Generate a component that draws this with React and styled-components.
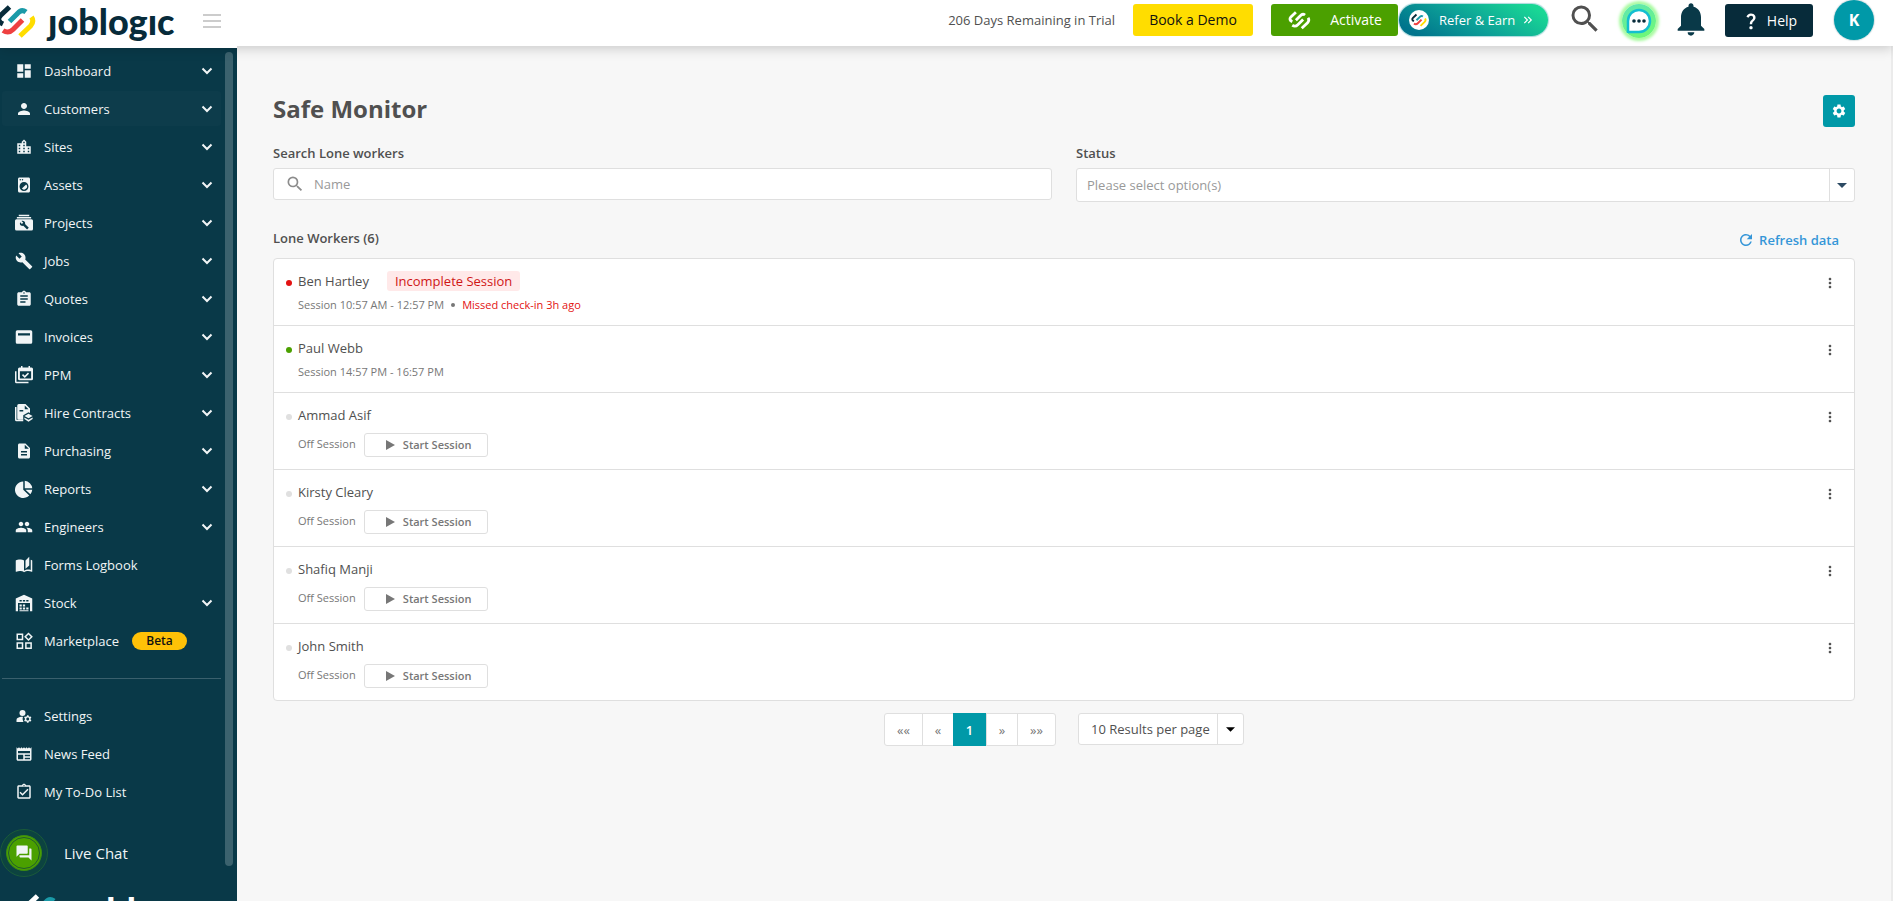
import React from 'react'
import styled, { createGlobalStyle } from 'styled-components'
import {
  MdDashboard, MdPerson, MdLocationCity, MdLocalLaundryService, MdBuild, MdAssignment,
  MdDescription, MdPeople, MdAutoStories, MdManageAccounts, MdNewspaper,
  MdOutlineAssignmentTurnedIn, MdForum, MdSearch, MdSettings, MdRefresh, MdMoreVert,
  MdKeyboardDoubleArrowRight, MdNotifications, MdQuestionMark,
} from 'react-icons/md'

const colors = {
  navy: '#093948',
  ink: '#072b3a',
  teal: '#0099a8',
  green: '#4ba000',
  yellow: '#ffdd00',
  red: '#e31212',
  text: '#505050',
  muted: '#777777',
  line: '#dfdfdf',
  page: '#f7f7f7',
}

const GlobalStyle = createGlobalStyle`
  * {
    box-sizing: border-box;
  }
  body {
    margin: 0;
    background: ${colors.page};
    color: ${colors.text};
    font-family: "Open Sans", "Noto Sans", sans-serif;
    font-size: 13px;
    line-height: 20px;
    overflow: hidden;
  }
  button, input, select {
    font: inherit;
    color: inherit;
  }
  button {
    border: 0;
    padding: 0;
    background: none;
    cursor: pointer;
  }
  a {
    color: inherit;
    text-decoration: none;
  }
  svg {
    display: block;
    flex: none;
  }
`

/* ---------- logo ---------- */

// color paints the whole mark, lead only the first stripe
const LogoMark = ({ width, height, left = -4, color, lead = '#072b3a' }) => (
  <svg width={width} height={height} viewBox={`${left} 4 ${36 - left} 36`} fill="none" strokeWidth="5" aria-hidden="true">
    <path stroke={color || lead} d="M3 25 Q-4 21.500 0.500 16.500 L9.500 8" />
    <path stroke={color || '#1a9aa8'} d="M9.500 22.500 L17.500 14.500 Q21.500 9.500 26 13" />
    <path stroke={color || '#ee4040'} d="M22.500 21 L13 30.500 Q8.500 35 3 31.500" />
    <path stroke={color || '#ffdd00'} d="M31.500 18 Q34.500 22.500 30.500 27 L20 37" />
  </svg>
)

const Brand = styled.a`
  display: flex;
  align-items: center;
  gap: 12px;
`

const BrandName = styled.span`
  color: ${(props) => props.$color};
  font-family: Lato, sans-serif;
  font-size: 36px;
  line-height: 36px;
  font-weight: 900;
`

/* ---------- header ---------- */

const Header = styled.header`
  position: relative;
  z-index: 2;
  display: flex;
  align-items: flex-start;
  height: 46px;
  background: #fff;
  box-shadow: 0 2px 12px rgba(0, 0, 0, 0.2);
`

const BrandArea = styled.div`
  display: flex;
  align-items: flex-start;
  gap: 29px;
  height: 48px;
  width: 237px;
  background: #fff;
`

const MenuToggle = styled.button`
  display: flex;
  flex-direction: column;
  gap: 4px;
  margin-top: 14px;
`

const MenuBar = styled.span`
  width: 18px;
  height: 2px;
  background: #cccccc;
`

const HeaderTools = styled.div`
  display: flex;
  align-items: flex-start;
  margin-left: auto;
  padding: 4px 19px 0 0;
`

const Trial = styled.span`
  margin: 6px 18px 0 0;
`

const HeaderButton = styled.button`
  display: flex;
  align-items: center;
  justify-content: center;
  gap: ${(props) => props.$gap || 0}px;
  width: ${(props) => props.$width}px;
  height: ${(props) => props.$height || 32}px;
  border-radius: 3px;
  background: ${(props) => props.$bg};
  color: ${(props) => props.$color || '#fff'};
  font-size: 14px;
  font-weight: 500;
`

const Refer = styled.button`
  display: flex;
  align-items: center;
  width: 149px;
  height: 32px;
  padding-left: 10px;
  border-radius: 16px;
  background: linear-gradient(30deg, #00748c 10%, #0c9e97 45%, #19d795 90%);
  box-shadow: 0 0 1px 1px #a9d9dc;
  color: #fff;
  font-weight: 500;
`

const ReferMark = styled.span`
  display: flex;
  align-items: center;
  justify-content: center;
  width: 20px;
  height: 20px;
  margin-right: 10px;
  border-radius: 50%;
  background: #fff;
`

const IconButton = styled.button`
  display: flex;
  align-items: center;
  height: 30px;
  color: ${(props) => props.$color};
`

const Spacer = styled.span`
  width: ${(props) => props.$w}px;
`

const ChatBubble = styled.button`
  display: flex;
  align-items: center;
  justify-content: center;
  width: 34px;
  height: 34px;
  border-radius: 50%;
  background: linear-gradient(160deg, #5fe6b4, #70fa70);
  box-shadow: 0 0 3px 3px #a8fba0;
`

const Avatar = styled.button`
  width: 40px;
  height: 40px;
  margin-top: -4px;
  border-radius: 50%;
  background: ${colors.teal};
  box-shadow: 0 0 1px 1px #d8e3e5;
  color: #fff;
  font-size: 16px;
  font-weight: 700;
`

/* ---------- sidebar ---------- */

const Layout = styled.div`
  display: flex;
  height: calc(100vh - 46px);
`

const Sidebar = styled.aside`
  display: flex;
  flex: none;
  width: 237px;
  padding-top: 2px;
  background: ${colors.navy};
  color: #f1f5f6;
  overflow: hidden;
`

const SidebarBody = styled.div`
  width: 221px;
  padding: 5px 0 0 2px;
`

const NavList = styled.ul`
  display: grid;
  gap: 3px;
  margin: 0;
  padding: 0;
  list-style: none;
`

const NavLink = styled.a`
  display: flex;
  align-items: center;
  height: 35px;
  padding: 0 8px 0 13px;
  border-radius: 3px;
  background: ${(props) => (props.$active ? '#0d3c4b' : 'transparent')};
  font-size: 13px;
  font-weight: 500;
`

const NavIcon = styled.span`
  display: flex;
  width: 29px;
`

const Chevron = styled.svg`
  margin-left: auto;
`

const Beta = styled.span`
  width: 55px;
  margin-left: 13px;
  border-radius: 9px;
  background: #ffc107;
  color: #111;
  font-size: 12px;
  line-height: 18px;
  font-weight: 600;
  text-align: center;
`

const Divider = styled.hr`
  height: 1px;
  margin: 20px 0 19px;
  border: 0;
  background: #3a606d;
`

const LiveChat = styled.a`
  display: flex;
  align-items: center;
  gap: 16px;
  margin: 20px 0 0 -2px;
  font-size: 15px;
`

const ChatRing = styled.span`
  display: flex;
  align-items: center;
  justify-content: center;
  width: 48px;
  height: 48px;
  border: 1px solid #1a5a39;
  border-radius: 50%;
  background: #0c4340;
`

const ChatDisc = styled.span`
  display: flex;
  align-items: center;
  justify-content: center;
  width: 36px;
  height: 36px;
  border: 1px solid #3b8b13;
  outline: 1px solid #215d2d;
  outline-offset: -3px;
  border-radius: 50%;
  background: ${colors.green};
`

const FooterBrand = styled.div`
  margin-top: 12px;
  padding-left: 26px;
`

const ScrollThumb = styled.div`
  width: 8px;
  height: calc(100vh - 87px);
  margin: 4px 4px 0 auto;
  border-radius: 4px;
  background: #3b626e;
`

/* Nav glyphs the icon set has no match for */
const Glyph = ({ children }) => (
  <svg width="18" height="18" viewBox="0 0 24 24" fill="currentColor">{children}</svg>
)

const ProjectsIcon = () => (
  <Glyph>
    <path d="M5 1h14v2H5zM2.500 4h19v2h-19z" />
    <path fillRule="evenodd" d="M2 7h20a2 2 0 0 1 2 2v11a2 2 0 0 1-2 2H2a2 2 0 0 1-2-2V9a2 2 0 0 1 2-2zm6.700 2.300 2.300 2.300-1.800 1.800L6.900 11c-.9 1.900-.2 3.500 1 4.300 1 .7 2.200.7 3.200.4l5 5 2.300-2.300-5-5c.3-1.200.1-2.300-.9-3.300-1-1-2.500-1.300-3.800-.8z" />
  </Glyph>
)

const InvoicesIcon = () => (
  <Glyph>
    <path fillRule="evenodd" d="M3 3h18a2 2 0 0 1 2 2v14a2 2 0 0 1-2 2H3a2 2 0 0 1-2-2V5a2 2 0 0 1 2-2zm1 4v3h16V7z" />
  </Glyph>
)

const PpmIcon = () => (
  <Glyph>
    <path fillRule="evenodd" d="M8 0h2v2h8V0h2v2h2a2 2 0 0 1 2 2v13a2 2 0 0 1-2 2H6a2 2 0 0 1-2-2V4a2 2 0 0 1 2-2h2zM6.500 7v9.500h15V7z" />
    <path d="M0 7h2v14h16v2H2a2 2 0 0 1-2-2z" />
    <path d="m10 11.500 3 3 5-5" fill="none" stroke="currentColor" strokeWidth="2" />
  </Glyph>
)

const HireIcon = () => (
  <Glyph>
    <path d="M0 4h2v17h9v2H2a2 2 0 0 1-2-2z" />
    <path fillRule="evenodd" d="M5 0h9l6 6v6l-2-1-7 4v6H5a2 2 0 0 1-2-2V2a2 2 0 0 1 2-2zm8 2v5h5zM6 8v2h5V8z" />
    <path d="m18 13 5.500 3-5.500 3-5.500-3zM12.500 18l5.500 3 5.500-3v2L18 23.500 12.500 20z" />
  </Glyph>
)

const ReportsIcon = () => (
  <Glyph>
    <path d="M11 2v11l8 7.500A11 11 0 1 1 11 2z" />
    <path d="M13 1a11 11 0 0 1 10 10H13zM14 13h9a11 11 0 0 1-2.500 6z" />
  </Glyph>
)

const StockIcon = () => (
  <Glyph>
    <path fillRule="evenodd" d="M12 1 23 6v17h-3V12H4v11H1V6zM6 8v2h3V8zm4.500 0v2h3V8zM15 8v2h3V8z" />
    <path d="M6 14h3v2.500H6zM6 18h3v2.500H6zM10.500 18h3v2.500h-3zM10.500 14h3v2.500h-3zM15 18h3v2.500h-3zM6 21.500h12V23H6z" />
  </Glyph>
)

const MarketplaceIcon = () => (
  <Glyph>
    <path fillRule="evenodd" d="M2 2h9v9H2zm2 2v5h5V4zM2 13.500h9v9H2zm2 2v5h5v-5zM13.500 13.500h9v9h-9zm2 2v5h5v-5zM18 .5 23.800 6.300 18 12.100l-5.800-5.800zm0 2.800-3 3 3 3 3-3z" />
  </Glyph>
)

const navItems = [
  { label: 'Dashboard', Icon: MdDashboard, open: true },
  { label: 'Customers', Icon: MdPerson, open: true, active: true },
  { label: 'Sites', Icon: MdLocationCity, open: true },
  { label: 'Assets', Icon: MdLocalLaundryService, open: true },
  { label: 'Projects', Icon: ProjectsIcon, open: true },
  { label: 'Jobs', Icon: MdBuild, open: true },
  { label: 'Quotes', Icon: MdAssignment, open: true },
  { label: 'Invoices', Icon: InvoicesIcon, open: true },
  { label: 'PPM', Icon: PpmIcon, open: true },
  { label: 'Hire Contracts', Icon: HireIcon, open: true },
  { label: 'Purchasing', Icon: MdDescription, open: true },
  { label: 'Reports', Icon: ReportsIcon, open: true },
  { label: 'Engineers', Icon: MdPeople, open: true },
  { label: 'Forms Logbook', Icon: MdAutoStories },
  { label: 'Stock', Icon: StockIcon, open: true },
  { label: 'Marketplace', Icon: MarketplaceIcon, beta: true },
]

const toolItems = [
  { label: 'Settings', Icon: MdManageAccounts },
  { label: 'News Feed', Icon: MdNewspaper },
  { label: 'My To-Do List', Icon: MdOutlineAssignmentTurnedIn },
]

const Nav = ({ items }) => (
  <NavList>
    {items.map(({ label, Icon, open, active, beta }) => (
      <li key={label}>
        <NavLink href="#" $active={active}>
          <NavIcon><Icon size={18} /></NavIcon>
          {label}
          {beta && <Beta>Beta</Beta>}
          {open && (
            <Chevron width="12" height="8" viewBox="0 0 12 8" fill="none" stroke="currentColor" strokeWidth="2">
              <path d="M1.500 1.500 6 6l4.500-4.500" />
            </Chevron>
          )}
        </NavLink>
      </li>
    ))}
  </NavList>
)

/* ---------- page ---------- */

const Main = styled.main`
  flex: 1;
  min-width: 0;
  padding: 47px 36px 0 36px;
  border-right: 2px solid #ebebeb;
`

const TitleRow = styled.div`
  display: flex;
  justify-content: space-between;
  align-items: flex-start;
  height: 34px;
`

const Title = styled.h1`
  margin: 0;
  font-size: 24px;
  line-height: 32px;
  font-weight: 700;
`

const GearButton = styled.button`
  display: flex;
  align-items: center;
  justify-content: center;
  align-self: flex-end;
  width: 32px;
  height: 32px;
  border-radius: 3px;
  background: ${colors.teal};
  color: #fff;
`

const Filters = styled.div`
  display: grid;
  grid-template-columns: 1fr 1fr;
  gap: 24px;
  margin-top: 16px;
`

const Label = styled.label`
  display: block;
  margin-bottom: 5px;
  font-weight: 600;
`

const SearchBox = styled.div`
  display: flex;
  align-items: center;
  height: 32px;
  padding-left: 11px;
  border: 1px solid ${colors.line};
  border-radius: 3px;
  background: #fff;
  color: #8c8c8c;
`

const SearchInput = styled.input`
  flex: 1;
  margin-left: 9px;
  padding: 0;
  border: 0;
  outline: 0;
  background: none;
  &::placeholder {
    color: #999;
  }
`

const SelectBox = styled.div`
  display: flex;
  width: ${(props) => props.$width || '100%'};
  height: ${(props) => props.$height}px;
  border: 1px solid ${colors.line};
  border-radius: 3px;
  background: #fff;
`

const Select = styled.select`
  flex: 1;
  min-width: 0;
  appearance: none;
  padding: 0 0 0 ${(props) => props.$pad}px;
  border: 0;
  outline: 0;
  background: none;
  color: ${(props) => props.$color};
`

const Caret = styled.span`
  display: flex;
  align-items: center;
  justify-content: center;
  width: ${(props) => props.$width}px;
  border-left: 1px solid ${colors.line};
  color: ${(props) => props.$color};
  pointer-events: none;
`

const ListHead = styled.div`
  display: flex;
  justify-content: space-between;
  margin-top: 26px;
  padding-right: 16px;
`

const ListTitle = styled.h2`
  margin: 0;
  font-size: 13px;
  line-height: 20px;
  font-weight: 600;
`

const Refresh = styled.button`
  display: flex;
  align-items: center;
  gap: 4px;
  margin-top: 2px;
  color: #3596d8;
  font-weight: 600;
`

const WorkerList = styled.ul`
  margin: 8px 0 0;
  padding: 0;
  border: 1px solid ${colors.line};
  border-radius: 4px;
  background: #fff;
  list-style: none;
`

const Worker = styled.li`
  display: flex;
  padding: 12px 16px 10px 12px;
  & + & {
    border-top: 1px solid ${colors.line};
  }
`

const Dot = styled.span`
  width: 6px;
  height: 6px;
  margin: 9px 6px 0 0;
  border-radius: 50%;
  background: ${(props) => props.$color};
`

const WorkerInfo = styled.div`
  flex: 1;
`

const WorkerName = styled.div`
  display: flex;
  gap: 18px;
  height: 24px;
`

const Tag = styled.span`
  padding: 0 8px;
  height: 20px;
  border-radius: 3px;
  background: #ffe9e9;
  color: #cf1616;
`

const Session = styled.div`
  display: flex;
  align-items: center;
  min-height: 20px;
  color: ${colors.muted};
  font-size: 11px;
`

const Bullet = styled.span`
  width: 4px;
  height: 4px;
  margin: 0 7px;
  border-radius: 50%;
  background: ${colors.muted};
`

const Missed = styled.span`
  color: ${colors.red};
`

const StartButton = styled.button`
  display: flex;
  align-items: center;
  justify-content: center;
  gap: 8px;
  width: 124px;
  height: 24px;
  margin: 4px 0 2px 8px;
  padding-left: 6px;
  border: 1px solid ${colors.line};
  border-radius: 3px;
  font-weight: 600;
`

const MoreButton = styled.button`
  display: flex;
  align-self: flex-start;
  margin-top: 4px;
`

const Pager = styled.div`
  display: flex;
  justify-content: center;
  gap: 22px;
  margin-top: 12px;
`

const Pages = styled.nav`
  display: flex;
  height: 33px;
  border: 1px solid ${colors.line};
  border-radius: 3px;
  background: #fff;
`

const PageButton = styled.button`
  width: ${(props) => props.$width}px;
  color: ${colors.muted};
  &:not(:first-child) {
    border-left: 1px solid ${colors.line};
  }
  &&[aria-current] {
    margin: -1px 0;
    border: 0;
    background: ${colors.teal};
    color: #fff;
    font-weight: 600;
  }
`

const CaretGlyph = ({ width }) => (
  <svg width={width} height="5" viewBox="0 0 10 5" fill="currentColor"><path d="M0 0h10L5 5z" /></svg>
)

const workers = [
  { name: 'Ben Hartley', color: '#e31212', session: '10:57 AM - 12:57 PM', tag: 'Incomplete Session', missed: 'Missed check-in 3h ago' },
  { name: 'Paul Webb', color: colors.green, session: '14:57 PM - 16:57 PM' },
  { name: 'Ammad Asif', color: '#e0e0e0' },
  { name: 'Kirsty Cleary', color: '#e0e0e0' },
  { name: 'Shafiq Manji', color: '#e0e0e0' },
  { name: 'John Smith', color: '#e0e0e0' },
]

const WorkerRow = ({ name, color, session, tag, missed }) => (
  <Worker>
    <Dot $color={color} />
    <WorkerInfo>
      <WorkerName>
        {name}
        {tag && <Tag>{tag}</Tag>}
      </WorkerName>
      <Session>
        {session ? `Session ${session}` : 'Off Session'}
        {missed && (
          <>
            <Bullet />
            <Missed>{missed}</Missed>
          </>
        )}
        {!session && (
          <StartButton>
            <svg width="9" height="10" viewBox="0 0 9 10" fill="currentColor"><path d="M0 0l9 5-9 5z" /></svg>
            Start Session
          </StartButton>
        )}
      </Session>
    </WorkerInfo>
    <MoreButton aria-label={`Actions for ${name}`}><MdMoreVert size={16} /></MoreButton>
  </Worker>
)

const App = () => (
  <>
    <GlobalStyle />
    <Header>
      <BrandArea>
        <Brand href="#" aria-label="joblogic">
          <LogoMark width={36} height={42} left={0} />
          <BrandName $color={colors.ink}>ȷoblogıc</BrandName>
        </Brand>
        <MenuToggle aria-label="Toggle menu">
          <MenuBar />
          <MenuBar />
          <MenuBar />
        </MenuToggle>
      </BrandArea>
      <HeaderTools>
        <Trial>206 Days Remaining in Trial</Trial>
        <HeaderButton $width={120} $bg={colors.yellow} $color="#111">Book a Demo</HeaderButton>
        <Spacer $w={18} />
        <HeaderButton $width={127} $gap={18} $bg={colors.green}>
          <LogoMark width={25} height={20} color="#fff" />
          Activate
        </HeaderButton>
        <Spacer $w={1} />
        <Refer>
          <ReferMark><LogoMark width={16} height={14} /></ReferMark>
          Refer &amp; Earn
          <Spacer $w={6} />
          <MdKeyboardDoubleArrowRight size={14} />
        </Refer>
        <Spacer $w={19} />
        <IconButton aria-label="Search" $color="#505050"><MdSearch size={36} /></IconButton>
        <Spacer $w={19} />
        <ChatBubble aria-label="Messages">
          <svg width="28" height="28" viewBox="0 0 28 28">
            <path d="M3 26V14A11 11 0 1 1 14 25H3z" fill="#fff" stroke="#13bfd0" strokeWidth="2.500" />
            <circle cx="9" cy="14" r="1.800" fill="#072b3a" />
            <circle cx="14" cy="14" r="1.800" fill="#072b3a" />
            <circle cx="19" cy="14" r="1.800" fill="#072b3a" />
          </svg>
        </ChatBubble>
        <Spacer $w={15} />
        <IconButton aria-label="Notifications" $color={colors.navy}><MdNotifications size={40} /></IconButton>
        <Spacer $w={14} />
        <HeaderButton $width={88} $height={33} $gap={6} $bg={colors.ink}>
          <MdQuestionMark size={20} />
          Help
        </HeaderButton>
        <Spacer $w={21} />
        <Avatar>K</Avatar>
      </HeaderTools>
    </Header>
    <Layout>
      <Sidebar>
        <SidebarBody>
          <Nav items={navItems} />
          <Divider />
          <Nav items={toolItems} />
          <LiveChat href="#">
            <ChatRing><ChatDisc><MdForum size={18} /></ChatDisc></ChatRing>
            Live Chat
          </LiveChat>
          <FooterBrand>
            <Brand href="#" aria-label="joblogic">
              <LogoMark width={36} height={42} left={0} lead="#fff" />
              <BrandName $color="#fff">ȷoblogıc</BrandName>
            </Brand>
          </FooterBrand>
        </SidebarBody>
        <ScrollThumb />
      </Sidebar>
      <Main>
        <TitleRow>
          <Title>Safe Monitor</Title>
          <GearButton aria-label="Safe Monitor settings"><MdSettings size={16} /></GearButton>
        </TitleRow>
        <Filters>
          <div>
            <Label htmlFor="worker-name">Search Lone workers</Label>
            <SearchBox>
              <MdSearch size={20} />
              <SearchInput id="worker-name" placeholder="Name" />
            </SearchBox>
          </div>
          <div>
            <Label htmlFor="worker-status">Status</Label>
            <SelectBox $height={34}>
              <Select id="worker-status" $pad={10} $color="#999">
                <option>Please select option(s)</option>
              </Select>
              <Caret $width={25} $color="#2c4a63"><CaretGlyph width={10} /></Caret>
            </SelectBox>
          </div>
        </Filters>
        <ListHead>
          <ListTitle>Lone Workers (6)</ListTitle>
          <Refresh><MdRefresh size={18} />Refresh data</Refresh>
        </ListHead>
        <WorkerList>
          {workers.map((worker) => <WorkerRow key={worker.name} {...worker} />)}
        </WorkerList>
        <Pager>
          <Pages aria-label="Pages">
            <PageButton $width={37}>««</PageButton>
            <PageButton $width={31}>«</PageButton>
            <PageButton $width={33} aria-current="page">1</PageButton>
            <PageButton $width={31}>»</PageButton>
            <PageButton $width={38}>»»</PageButton>
          </Pages>
          <SelectBox $height={32} $width="166px">
            <Select aria-label="Results per page" $pad={12} $color={colors.text}>
              <option>10 Results per page</option>
            </Select>
            <Caret $width={26} $color="#000"><CaretGlyph width={9} /></Caret>
          </SelectBox>
        </Pager>
      </Main>
    </Layout>
  </>
)

export default App
